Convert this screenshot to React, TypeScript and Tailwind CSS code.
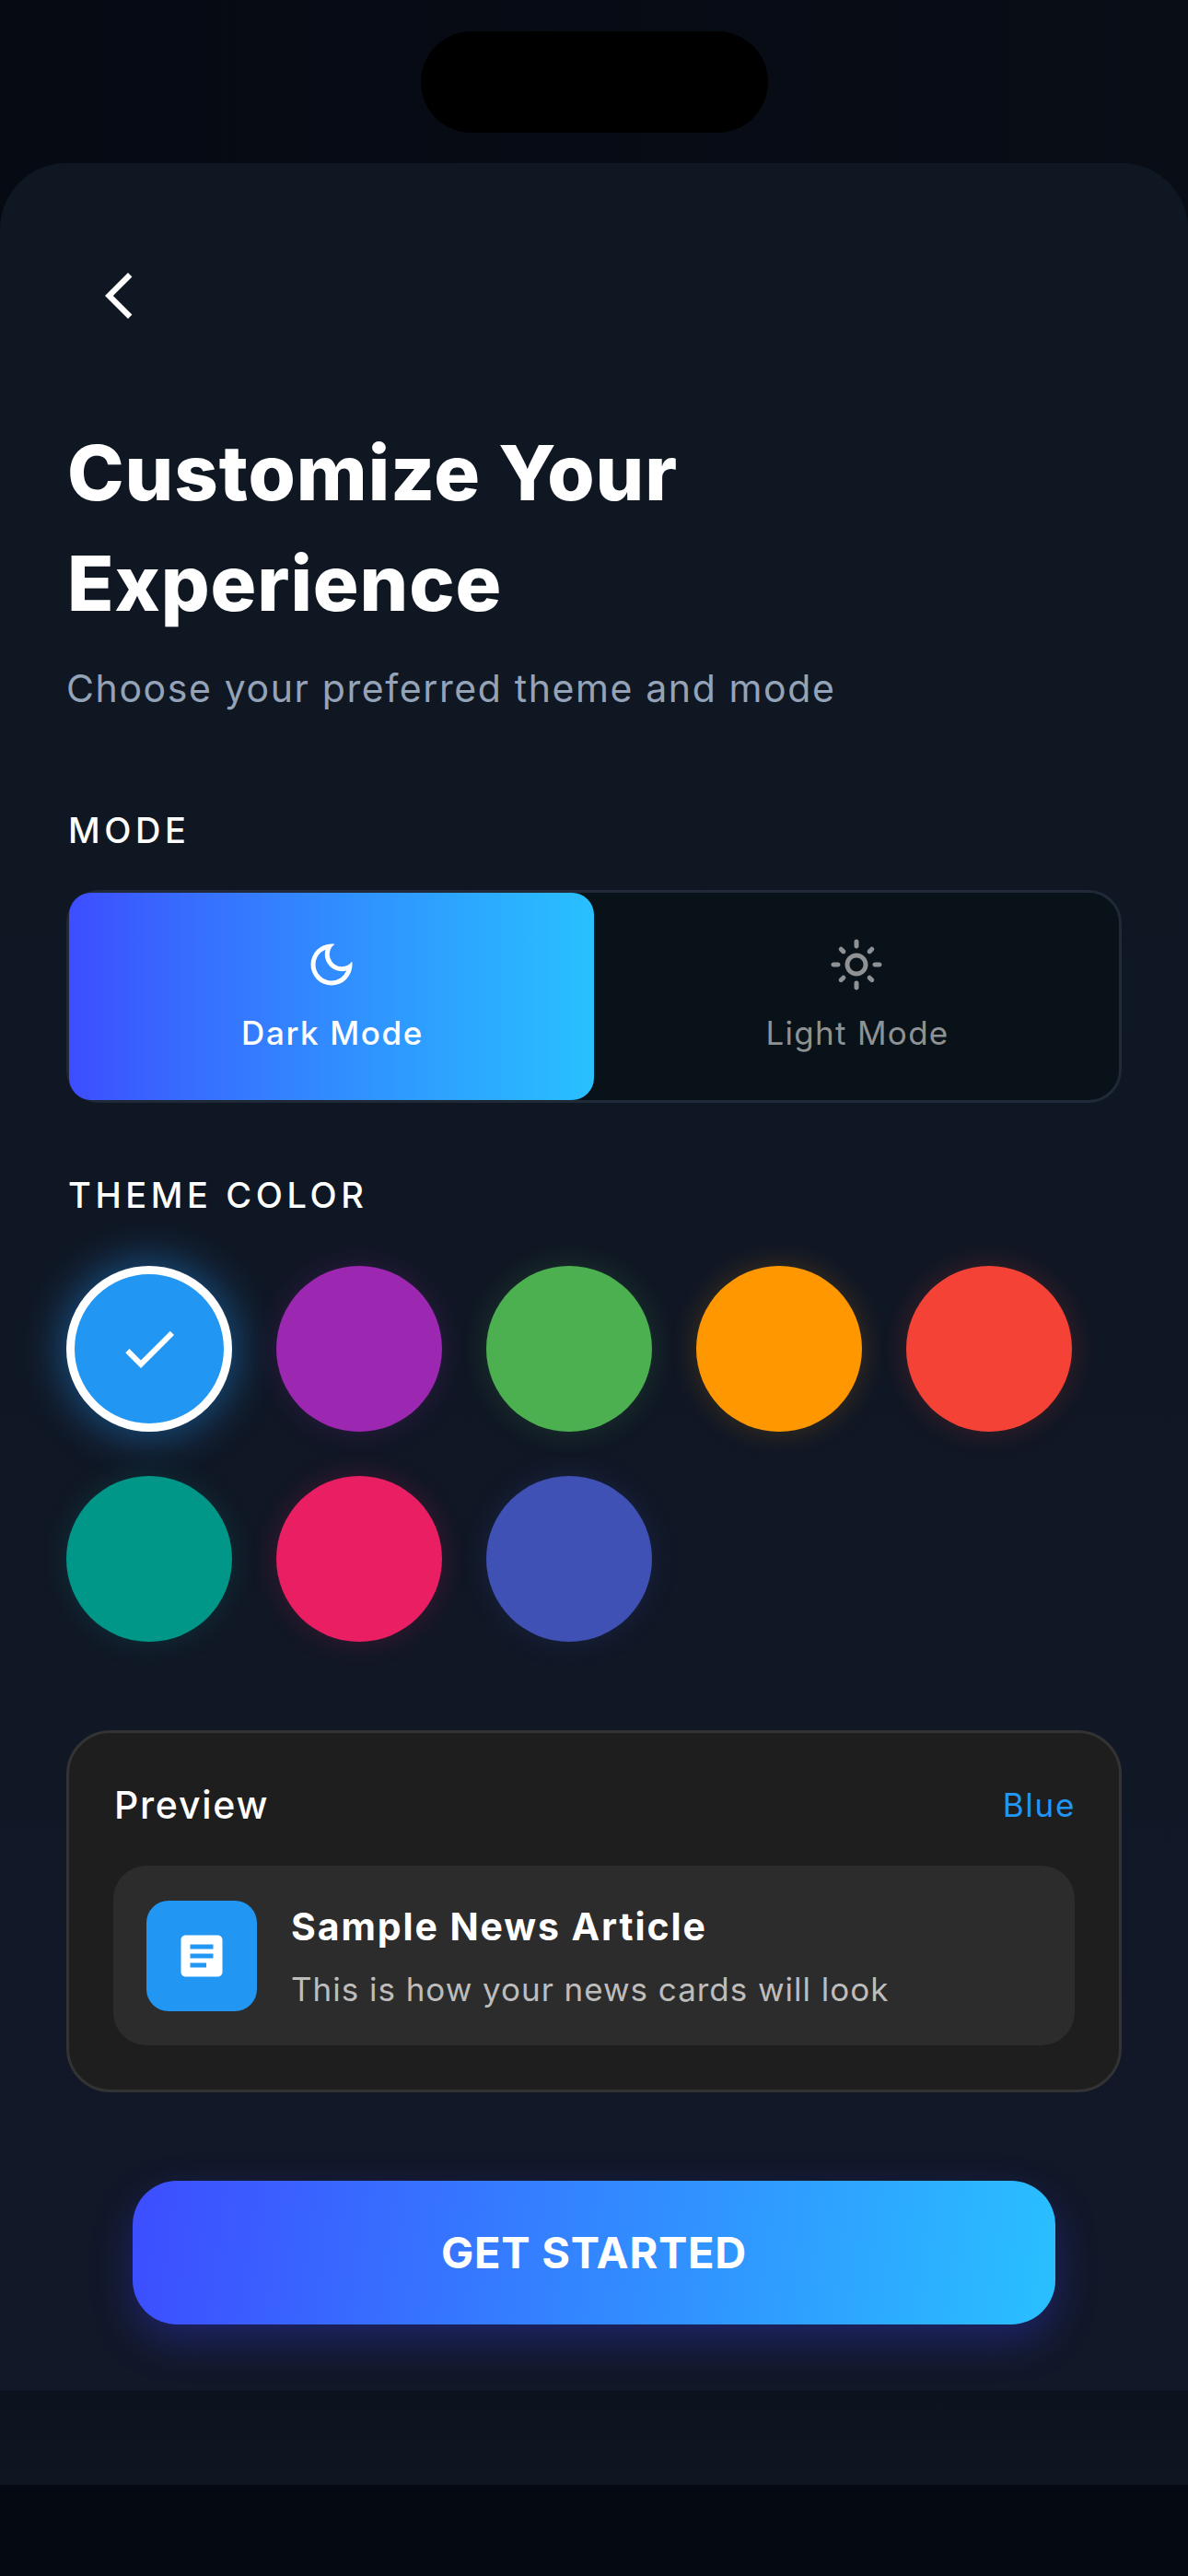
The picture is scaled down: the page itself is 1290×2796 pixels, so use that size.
import { useState } from 'react'
import { MdArrowBackIosNew, MdArticle, MdCheck, MdOutlineDarkMode, MdOutlineLightMode } from 'react-icons/md'

type Theme = { name: string; fill: string; glow: string; text: string }

const themes: Theme[] = [
  { name: 'Blue', fill: 'bg-[#2196f3]', glow: 'shadow-[0_0_45px_6px_rgba(33,150,243,0.45)]', text: 'text-[#2196f3]' },
  { name: 'Purple', fill: 'bg-[#9c27b0]', glow: 'shadow-[0_0_30px_0_rgba(156,39,176,0.2)]', text: 'text-[#9c27b0]' },
  { name: 'Green', fill: 'bg-[#4caf50]', glow: 'shadow-[0_0_30px_0_rgba(76,175,80,0.2)]', text: 'text-[#4caf50]' },
  { name: 'Orange', fill: 'bg-[#ff9800]', glow: 'shadow-[0_0_30px_0_rgba(255,152,0,0.2)]', text: 'text-[#ff9800]' },
  { name: 'Red', fill: 'bg-[#f44336]', glow: 'shadow-[0_0_30px_0_rgba(244,67,54,0.2)]', text: 'text-[#f44336]' },
  { name: 'Teal', fill: 'bg-[#009688]', glow: 'shadow-[0_0_30px_0_rgba(0,150,136,0.2)]', text: 'text-[#009688]' },
  { name: 'Pink', fill: 'bg-[#e91e63]', glow: 'shadow-[0_0_30px_0_rgba(233,30,99,0.2)]', text: 'text-[#e91e63]' },
  { name: 'Indigo', fill: 'bg-[#3f51b5]', glow: 'shadow-[0_0_30px_0_rgba(63,81,181,0.2)]', text: 'text-[#3f51b5]' },
]

function SectionLabel({ children }: { children: string }) {
  return <h2 className="pl-0.5 text-[38px] leading-[54px] font-medium tracking-[4.6px] text-white">{children}</h2>
}

function ModeToggle() {
  return (
    <div className="mt-[38px] grid h-[231px] grid-cols-2 rounded-[36px] border-[3px] border-[#1f2937] bg-[#0a1219]">
      <button className="flex flex-col items-center justify-center rounded-[24px] bg-linear-to-r from-[#3d4dff] to-[#29c0ff] text-white">
        <MdOutlineDarkMode className="size-[60px]" />
        <span className="mt-[19px] pl-0.5 text-[35px] leading-[50px] font-medium tracking-[1.6px]">Dark Mode</span>
      </button>
      <button className="flex flex-col items-center justify-center text-[#8f9294]">
        <MdOutlineLightMode className="size-[60px]" />
        <span className="mt-[19px] pl-0.5 text-[35px] leading-[50px] tracking-[1.3px]">Light Mode</span>
      </button>
    </div>
  )
}

function Swatches({ selected, onSelect }: { selected: Theme; onSelect: (theme: Theme) => void }) {
  return (
    <div className="mt-[50px] flex flex-wrap gap-12">
      {themes.map((theme) => (
        <button
          key={theme.name}
          aria-label={theme.name}
          onClick={() => onSelect(theme)}
          className={`flex size-[180px] items-center justify-center rounded-full text-white ${theme.fill} ${theme.glow} ${
            theme === selected ? 'border-[9px] border-white' : ''
          }`}
        >
          {theme === selected && <MdCheck className="size-[72px]" />}
        </button>
      ))}
    </div>
  )
}

function PreviewCard({ theme }: { theme: Theme }) {
  return (
    <section className="mt-24 h-[393px] rounded-[48px] border-[3px] border-[#333333] bg-[#1e1e1e] p-12">
      <div className="flex items-center justify-between">
        <h3 className="pl-px text-[41px] leading-[60px] font-medium tracking-[1.74px] text-white">Preview</h3>
        <span className={`-mr-px pt-px text-[35px] leading-[59px] tracking-[1.7px] ${theme.text}`}>{theme.name}</span>
      </div>
      <div className="mt-9 flex h-[195px] items-center gap-[37px] rounded-[36px] bg-[#2c2c2c] px-9">
        <div className={`flex size-[120px] items-center justify-center rounded-[24px] text-white ${theme.fill}`}>
          <MdArticle className="size-[60px]" />
        </div>
        <div className="flex flex-col gap-[13px]">
          <p className="text-[41px] leading-[60px] font-[650] tracking-[1.9px] text-white">Sample News Article</p>
          <p className="text-[35px] leading-[51px] tracking-[0.97px] text-[#bdbdbd]">This is how your news cards will look</p>
        </div>
      </div>
    </section>
  )
}

export default function App() {
  const [selected, setSelected] = useState(themes[0])
  return (
    <div className="flex h-[2796px] w-[1290px] flex-col bg-[#050a12] font-['Inter',sans-serif]">
      <div className="flex h-[177px] justify-center bg-linear-to-r from-[#050a13] to-[#080d16] pt-[34px]">
        <div className="h-[110px] w-[377px] rounded-full bg-black" />
      </div>
      <div className="bg-linear-to-r from-[#050a13] to-[#080d16]">
        <main className="h-[2418px] rounded-t-[72px] bg-linear-to-b from-[#0f1722] via-[#101724] to-[#121828] px-[72px] pt-[114px]">
          <button aria-label="Back" className="ml-[27px] block size-[60px] text-white">
            <MdArrowBackIosNew className="size-[60px]" />
          </button>
          <h1 className="mt-[102px] pl-px text-[83px] leading-[120px] font-extrabold tracking-[0.9px] text-white">
            Customize Your
            <br />
            Experience
          </h1>
          <p className="mt-6 text-[41px] leading-[60px] tracking-[1.6px] text-[#94a3b8]">
            Choose your preferred theme and mode
          </p>
          <div className="mt-[97px]">
            <SectionLabel>MODE</SectionLabel>
            <ModeToggle />
          </div>
          <div className="mt-[73px]">
            <SectionLabel>THEME COLOR</SectionLabel>
            <Swatches selected={selected} onSelect={setSelected} />
          </div>
          <PreviewCard theme={selected} />
          <button className="mx-[72px] mt-24 block h-[156px] w-[1002px] rounded-[48px] bg-linear-[98deg] from-[#3d4dff] to-[#29c0ff] text-[47px] leading-[156px] font-[650] tracking-[0.72px] text-white shadow-[0_18px_45px_0_rgba(61,64,255,0.3)]">
            GET STARTED
          </button>
        </main>
      </div>
      <div className="h-[102px] bg-linear-to-b from-[#0c131e] to-[#0e1621]" />
    </div>
  )
}
